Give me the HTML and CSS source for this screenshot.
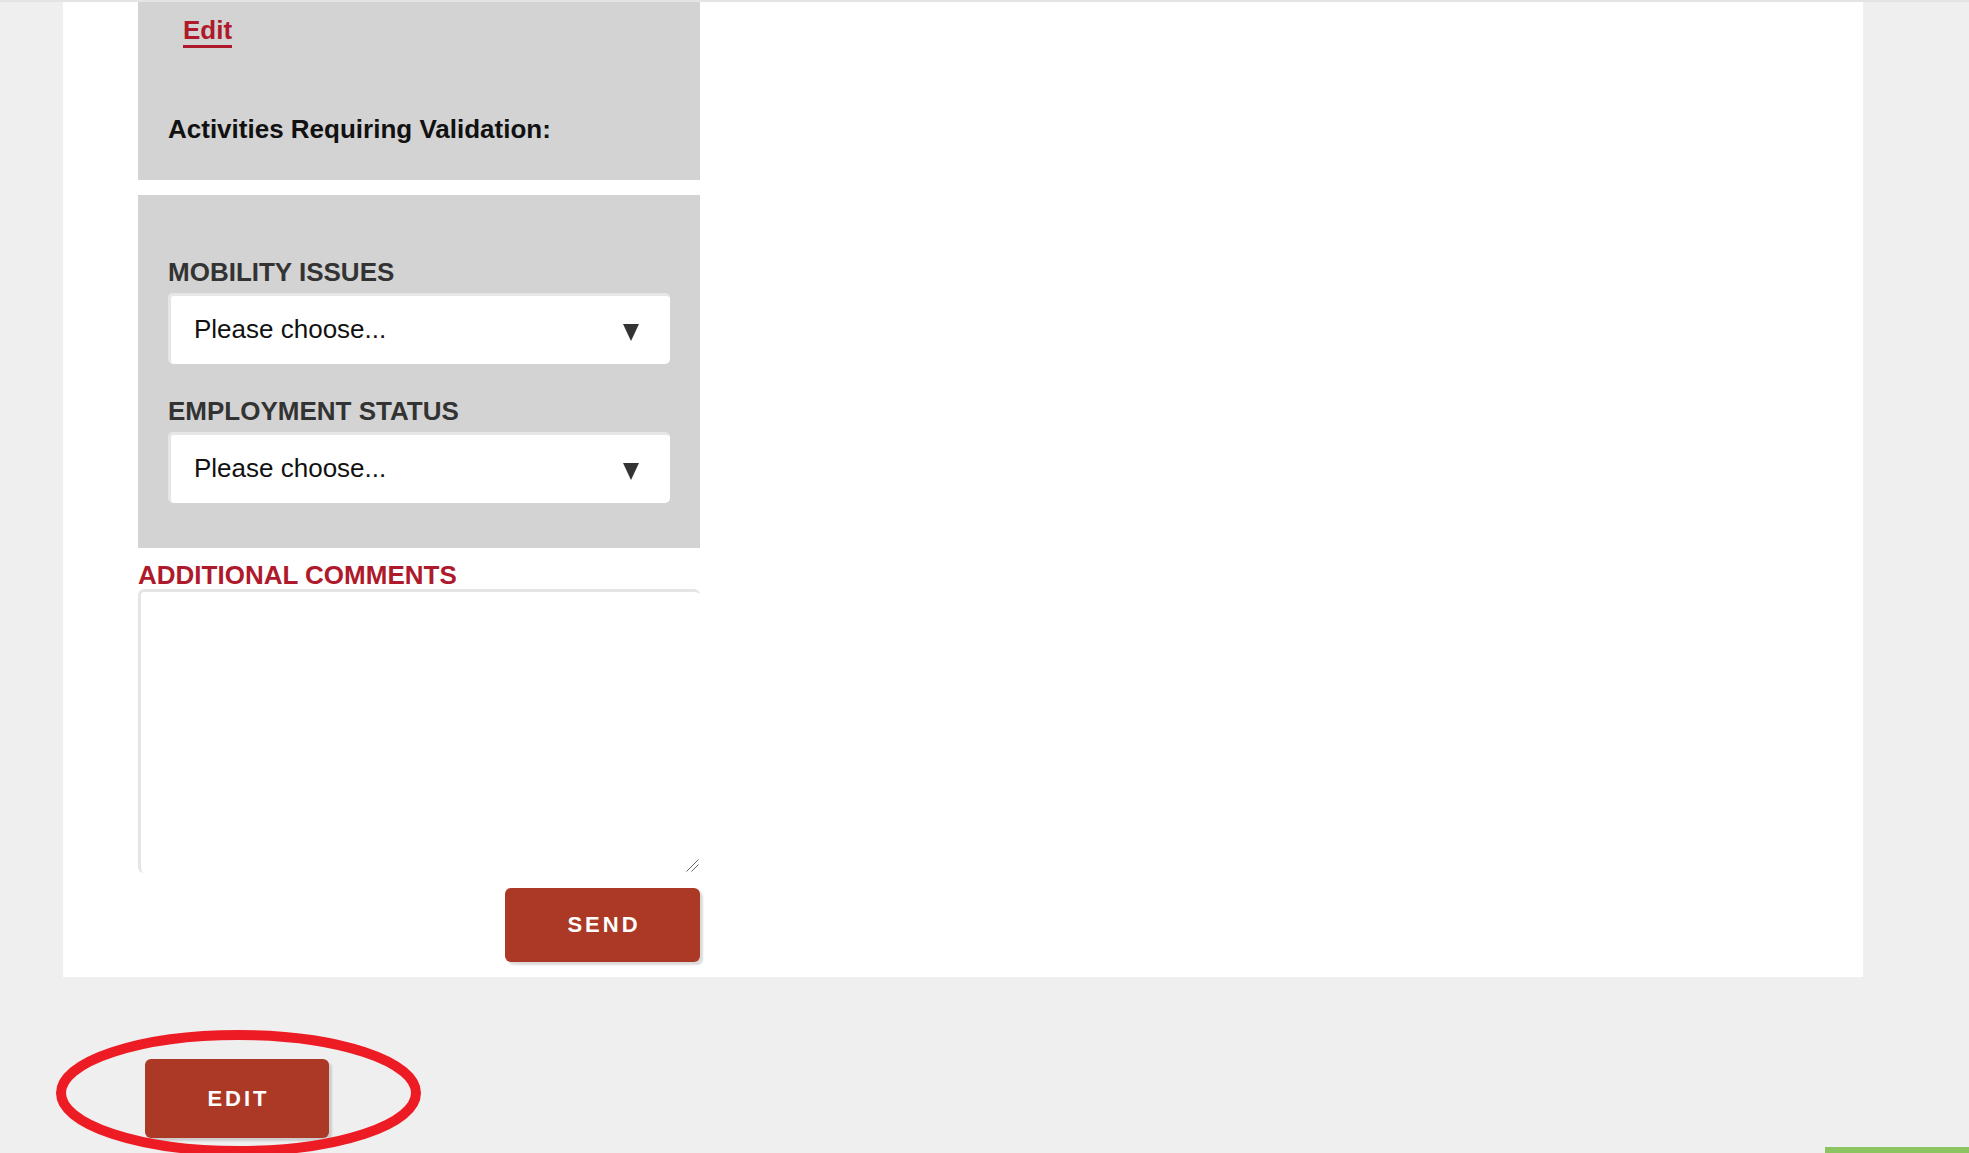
FILE: index.html
```html
<!DOCTYPE html>
<html lang="en">
<head>
<meta charset="utf-8">
<title>Validation request</title>
<link rel="stylesheet" href="styles.css">
</head>
<body>
<div class="topline"></div>
<main class="card">
  <form class="form">
    <section class="panel panel-summary">
      <a class="edit-link" href="#">Edit</a>
      <h3 class="summary-title">Activities Requiring Validation:</h3>
    </section>

    <section class="panel panel-fields">
      <label class="field-label">MOBILITY ISSUES</label>
      <div class="select">
        <span class="select-value">Please choose...</span>
        <svg class="select-arrow" width="16" height="17" viewBox="0 0 16 17"><polygon points="0,0 16,0 8,17" fill="#333"/></svg>
      </div>
      <label class="field-label field-label-next">EMPLOYMENT STATUS</label>
      <div class="select">
        <span class="select-value">Please choose...</span>
        <svg class="select-arrow" width="16" height="17" viewBox="0 0 16 17"><polygon points="0,0 16,0 8,17" fill="#333"/></svg>
      </div>
    </section>

    <label class="comments-label" for="comments">ADDITIONAL COMMENTS</label>
    <div class="comments-box">
      <textarea id="comments" class="comments"></textarea>
      <svg class="grip" width="13" height="13" viewBox="0 0 13 13">
        <line x1="0.5" y1="12.5" x2="12.5" y2="0.5" stroke="#666" stroke-width="1"/>
        <line x1="5.5" y1="12.5" x2="12.5" y2="5.5" stroke="#666" stroke-width="1"/>
      </svg>
    </div>

    <div class="actions">
      <button type="button" class="btn btn-send">SEND</button>
    </div>
  </form>
</main>

<div class="review">
  <button type="button" class="btn btn-edit">EDIT</button>
  <svg class="highlight" width="375" height="140" viewBox="0 0 375 140">
    <ellipse cx="187.5" cy="68" rx="177.5" ry="58" fill="none" stroke="#ed1c24" stroke-width="10"/>
  </svg>
</div>

<div class="chat-tab"></div>
</body>
</html>
```

FILE: styles.css
```css
html, body {
  margin: 0;
  padding: 0;
  height: 100%;
  overflow: hidden;
}

body {
  background: #efefef;
  font-family: "Liberation Sans", Arial, sans-serif;
  color: #111;
}

.topline {
  height: 2px;
  background: #e4e4e4;
}

.card {
  margin-left: 63px;
  width: 1800px;
  box-sizing: border-box;
  background: #fff;
  padding: 0 0 15px 75px;
}

.form {
  width: 562px;
  display: flex;
  flex-direction: column;
}

.panel {
  background: #d3d3d3;
}

.panel-summary {
  padding: 13px 30px 36px;
}

.edit-link {
  display: inline-block;
  margin-left: 15px;
  font-size: 26px;
  line-height: 30px;
  font-weight: bold;
  color: #ae1a2c;
  text-decoration: none;
  border-bottom: 3px solid #ae1a2c;
}

.summary-title {
  margin: 66px 0 0;
  font-size: 26px;
  line-height: 30px;
  font-weight: bold;
  color: #111;
}

.panel-fields {
  margin-top: 15px;
  padding: 62px 30px 45px;
}

.field-label {
  display: block;
  font-size: 26px;
  line-height: 30px;
  font-weight: bold;
  color: #333;
}

.field-label-next {
  margin-top: 32px;
}

.select {
  margin-top: 6px;
  height: 71px;
  box-sizing: border-box;
  background: #fff;
  border-top: 3px solid #e6e6e6;
  border-left: 3px solid #e6e6e6;
  border-radius: 5px;
  padding: 18px 30px 0 23px;
  display: flex;
  justify-content: space-between;
  align-items: flex-start;
}

.field-label-next + .select {
  margin-top: 6px;
}

.select-value {
  font-size: 26px;
  line-height: 30px;
  color: #111;
}

.select-arrow {
  margin-top: 10px;
  margin-right: 1px;
  flex: none;
}

.comments-label {
  display: block;
  margin-top: 13px;
  font-size: 26px;
  line-height: 28px;
  font-weight: bold;
  color: #ae1a2c;
}

.comments-box {
  position: relative;
}

.comments {
  display: block;
  width: 562px;
  height: 284px;
  box-sizing: border-box;
  margin: 0;
  background: #fff;
  border: 0;
  border-top: 3px solid #e5e5e5;
  border-left: 3px solid #e5e5e5;
  border-radius: 6px;
  resize: none;
  outline: none;
  font-family: inherit;
}

.grip {
  position: absolute;
  right: 1px;
  bottom: 1px;
  pointer-events: none;
}

.actions {
  display: flex;
  justify-content: flex-end;
  margin-top: 15px;
}

.btn {
  border: 0;
  border-radius: 6px;
  background: #ab3926;
  color: #fff;
  font-family: "Liberation Sans", Arial, sans-serif;
  font-size: 22px;
  font-weight: bold;
  letter-spacing: 3px;
  padding: 0 0 0 3px;
  box-shadow: 3px 3px 2px rgba(0, 0, 0, 0.14);
  cursor: pointer;
}

.btn-send {
  width: 195px;
  height: 74px;
}

.review {
  position: relative;
  margin-top: 82px;
  padding-left: 145px;
}

.btn-edit {
  position: relative;
  z-index: 1;
  width: 184px;
  height: 79px;
}

.highlight {
  position: absolute;
  left: 51px;
  top: -34px;
  z-index: 2;
  pointer-events: none;
}

.chat-tab {
  position: fixed;
  right: 0;
  bottom: 0;
  width: 144px;
  height: 6px;
  background: #8cc462;
}
```
